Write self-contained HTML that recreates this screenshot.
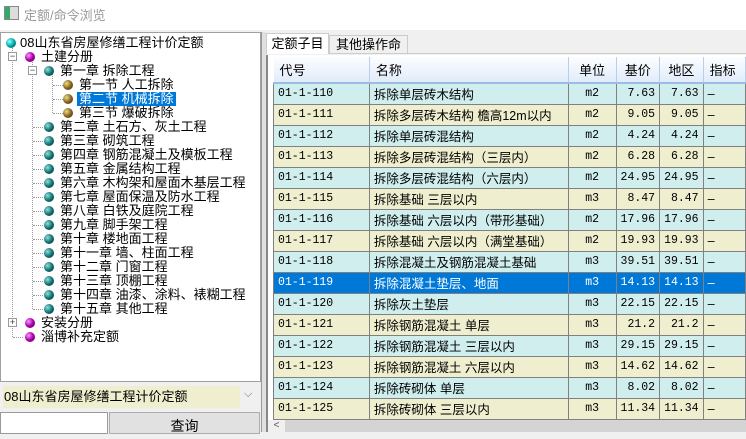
<!DOCTYPE html><html><head><meta charset="utf-8"><style>
*{margin:0;padding:0;box-sizing:border-box}
body{width:746px;height:432px;overflow:hidden;background:#f0f0f0;font-family:"Liberation Sans","Noto Sans CJK SC","WenQuanYi Zen Hei",sans-serif;font-size:12px;color:#000;position:relative}
.abs{position:absolute}
#title{left:0;top:0;width:746px;height:30px;background:#fff}
#tree{left:0;top:32px;width:261px;height:350px;background:#fff;border:1px solid #a0a0a0}
.row{position:absolute;height:14px;line-height:14px;white-space:nowrap;font-size:13px}
.ball{position:absolute;width:10px;height:10px;border-radius:50%}
.c{background:radial-gradient(circle at 35% 35%,#9ff,#0aa 50%,#044)}
.m{background:radial-gradient(circle at 35% 35%,#f9f,#a0a 50%,#404)}
.t{background:radial-gradient(circle at 35% 35%,#9dd,#177 50%,#022)}
.o{background:radial-gradient(circle at 35% 35%,#ed8,#862 50%,#320)}
.dv{position:absolute;border-left:1px dotted #999}
.dh{position:absolute;border-top:1px dotted #999;width:10px}
.pm{position:absolute;width:9px;height:9px;border:1px solid #999;background:#fff;font-size:9px;line-height:7px;text-align:center;color:#333}
table{border-collapse:collapse;position:absolute;left:273px;top:57px;table-layout:fixed}
td{border:1px solid #808080;height:21px;font-size:12.5px;padding:0 4px;white-space:nowrap;overflow:hidden}
td.k{font-family:"Liberation Mono",monospace;font-size:11.5px}
th{height:26px;font-weight:normal;font-size:13px;text-align:left;padding:0 6px;background:linear-gradient(#fdfdff,#e0ecfa);border-right:1px solid #b8d0ec;border-bottom:2px solid #9cbce4}
tr.a td{background:#d0eeee}tr.b td{background:#efefd0}
tr.s td{background:#0078d7;color:#fff}
.u{text-align:center;font-family:"Liberation Mono",monospace;font-size:11.5px}.n{text-align:right;font-family:"Liberation Mono",monospace;font-size:11.5px}
</style></head><body>
<div id="title" class="abs"><div class="abs" style="left:4px;top:6px;width:15px;height:14px;border:1px solid #888;background:linear-gradient(90deg,#3a6 40%,#ddd 40%)"></div><div class="abs" style="left:24px;top:5px;color:#999;font-size:13px">定额/命令浏览</div></div>
<div id="tree" class="abs">
<div class="dv" style="left:11px;top:12px;height:292px"></div>
<div class="dv" style="left:31px;top:26px;height:250px"></div>
<div class="dv" style="left:51px;top:40px;height:40px"></div>
<div class="ball c" style="left:5px;top:5px"></div><div class="row" style="left:19px;top:3px">08山东省房屋修缮工程计价定额</div>
<div class="pm" style="left:7px;top:19px">−</div><div class="ball m" style="left:24px;top:19px"></div><div class="row" style="left:40px;top:17px">土建分册</div>
<div class="pm" style="left:27px;top:33px">−</div><div class="ball t" style="left:43px;top:33px"></div><div class="row" style="left:59px;top:31px">第一章 拆除工程</div>
<div class="dh" style="left:52px;top:52px"></div><div class="ball o" style="left:62px;top:47px"></div><div class="row" style="left:78px;top:45px">第一节 人工拆除</div>
<div class="dh" style="left:52px;top:66px"></div><div class="ball o" style="left:62px;top:61px"></div><div class="row" style="left:76px;top:59px;background:#0078d7;color:#fff;padding:0 2px">第二节 机械拆除</div>
<div class="dh" style="left:52px;top:80px"></div><div class="ball o" style="left:62px;top:75px"></div><div class="row" style="left:78px;top:73px">第三节 爆破拆除</div>
<div class="dh" style="left:32px;top:94px"></div><div class="ball t" style="left:43px;top:89px"></div><div class="row" style="left:59px;top:87px">第二章 土石方、灰土工程</div>
<div class="dh" style="left:32px;top:108px"></div><div class="ball t" style="left:43px;top:103px"></div><div class="row" style="left:59px;top:101px">第三章 砌筑工程</div>
<div class="dh" style="left:32px;top:122px"></div><div class="ball t" style="left:43px;top:117px"></div><div class="row" style="left:59px;top:115px">第四章 钢筋混凝土及模板工程</div>
<div class="dh" style="left:32px;top:136px"></div><div class="ball t" style="left:43px;top:131px"></div><div class="row" style="left:59px;top:129px">第五章 金属结构工程</div>
<div class="dh" style="left:32px;top:150px"></div><div class="ball t" style="left:43px;top:145px"></div><div class="row" style="left:59px;top:143px">第六章 木构架和屋面木基层工程</div>
<div class="dh" style="left:32px;top:164px"></div><div class="ball t" style="left:43px;top:159px"></div><div class="row" style="left:59px;top:157px">第七章 屋面保温及防水工程</div>
<div class="dh" style="left:32px;top:178px"></div><div class="ball t" style="left:43px;top:173px"></div><div class="row" style="left:59px;top:171px">第八章 白铁及庭院工程</div>
<div class="dh" style="left:32px;top:192px"></div><div class="ball t" style="left:43px;top:187px"></div><div class="row" style="left:59px;top:185px">第九章 脚手架工程</div>
<div class="dh" style="left:32px;top:206px"></div><div class="ball t" style="left:43px;top:201px"></div><div class="row" style="left:59px;top:199px">第十章 楼地面工程</div>
<div class="dh" style="left:32px;top:220px"></div><div class="ball t" style="left:43px;top:215px"></div><div class="row" style="left:59px;top:213px">第十一章 墙、柱面工程</div>
<div class="dh" style="left:32px;top:234px"></div><div class="ball t" style="left:43px;top:229px"></div><div class="row" style="left:59px;top:227px">第十二章 门窗工程</div>
<div class="dh" style="left:32px;top:248px"></div><div class="ball t" style="left:43px;top:243px"></div><div class="row" style="left:59px;top:241px">第十三章 顶棚工程</div>
<div class="dh" style="left:32px;top:262px"></div><div class="ball t" style="left:43px;top:257px"></div><div class="row" style="left:59px;top:255px">第十四章 油漆、涂料、裱糊工程</div>
<div class="dh" style="left:32px;top:276px"></div><div class="ball t" style="left:43px;top:271px"></div><div class="row" style="left:59px;top:269px">第十五章 其他工程</div>
<div class="pm" style="left:7px;top:285px">+</div><div class="ball m" style="left:24px;top:285px"></div><div class="row" style="left:40px;top:283px">安装分册</div>
<div class="dh" style="left:12px;top:304px"></div><div class="ball m" style="left:24px;top:299px"></div><div class="row" style="left:40px;top:297px">淄博补充定额</div>
</div>
<div class="abs" style="left:3px;top:386px;width:237px;height:22px;background:#efefcf;line-height:22px;font-size:13px;padding-left:1px">08山东省房屋修缮工程计价定额</div>
<div class="abs" style="left:244px;top:388px;color:#666;font-size:11px">⌵</div>
<div class="abs" style="left:0;top:412px;width:108px;height:22px;background:#fff;border:1px solid #999"></div>
<div class="abs" style="left:109px;top:412px;width:151px;height:22px;background:#e1e1e1;border:1px solid #adadad;text-align:center;font-size:14px;line-height:26px">查询</div>
<div class="abs" style="left:261px;top:32px;width:5px;height:400px;background:#e0e0e0;border-left:1px solid #999"></div>
<div class="abs" style="left:266px;top:32px;width:480px;height:22px;border-bottom:1px solid #ccc"></div>
<div class="abs" style="left:266px;top:33px;width:63px;height:21px;background:#fff;border:1px solid #ccc;border-bottom:none;line-height:20px;text-align:center;font-size:13px">定额子目</div>
<div class="abs" style="left:329px;top:35px;width:79px;height:19px;border:1px solid #ccc;border-bottom:none;line-height:18px;text-align:center;font-size:13px">其他操作命令</div>
<div class="abs" style="left:266px;top:55px;width:480px;height:377px;background:#fff;border-left:2px solid #888"></div>
<table>
<colgroup><col style="width:99px"><col style="width:200px"><col style="width:50px"><col style="width:40px"><col style="width:40px"><col style="width:44px"></colgroup>
<tr><th>代号</th><th>名称</th><th style="text-align:center">单位</th><th style="text-align:center">基价</th><th style="text-align:center">地区</th><th>指标</th></tr>
<tr class="a"><td class="k">01-1-110</td><td>拆除单层砖木结构</td><td class="u">m2</td><td class="n">7.63</td><td class="n">7.63</td><td>–</td></tr>
<tr class="b"><td class="k">01-1-111</td><td>拆除多层砖木结构 檐高12m以内</td><td class="u">m2</td><td class="n">9.05</td><td class="n">9.05</td><td>–</td></tr>
<tr class="a"><td class="k">01-1-112</td><td>拆除单层砖混结构</td><td class="u">m2</td><td class="n">4.24</td><td class="n">4.24</td><td>–</td></tr>
<tr class="b"><td class="k">01-1-113</td><td>拆除多层砖混结构（三层内）</td><td class="u">m2</td><td class="n">6.28</td><td class="n">6.28</td><td>–</td></tr>
<tr class="a"><td class="k">01-1-114</td><td>拆除多层砖混结构（六层内）</td><td class="u">m2</td><td class="n">24.95</td><td class="n">24.95</td><td>–</td></tr>
<tr class="b"><td class="k">01-1-115</td><td>拆除基础 三层以内</td><td class="u">m3</td><td class="n">8.47</td><td class="n">8.47</td><td>–</td></tr>
<tr class="a"><td class="k">01-1-116</td><td>拆除基础 六层以内（带形基础）</td><td class="u">m2</td><td class="n">17.96</td><td class="n">17.96</td><td>–</td></tr>
<tr class="b"><td class="k">01-1-117</td><td>拆除基础 六层以内（满堂基础）</td><td class="u">m2</td><td class="n">19.93</td><td class="n">19.93</td><td>–</td></tr>
<tr class="a"><td class="k">01-1-118</td><td>拆除混凝土及钢筋混凝土基础</td><td class="u">m3</td><td class="n">39.51</td><td class="n">39.51</td><td>–</td></tr>
<tr class="s"><td class="k">01-1-119</td><td>拆除混凝土垫层、地面</td><td class="u">m3</td><td class="n">14.13</td><td class="n">14.13</td><td>–</td></tr>
<tr class="a"><td class="k">01-1-120</td><td>拆除灰土垫层</td><td class="u">m3</td><td class="n">22.15</td><td class="n">22.15</td><td>–</td></tr>
<tr class="b"><td class="k">01-1-121</td><td>拆除钢筋混凝土 单层</td><td class="u">m3</td><td class="n">21.2</td><td class="n">21.2</td><td>–</td></tr>
<tr class="a"><td class="k">01-1-122</td><td>拆除钢筋混凝土 三层以内</td><td class="u">m3</td><td class="n">29.15</td><td class="n">29.15</td><td>–</td></tr>
<tr class="b"><td class="k">01-1-123</td><td>拆除钢筋混凝土 六层以内</td><td class="u">m3</td><td class="n">14.62</td><td class="n">14.62</td><td>–</td></tr>
<tr class="a"><td class="k">01-1-124</td><td>拆除砖砌体 单层</td><td class="u">m3</td><td class="n">8.02</td><td class="n">8.02</td><td>–</td></tr>
<tr class="b"><td class="k">01-1-125</td><td>拆除砖砌体 三层以内</td><td class="u">m3</td><td class="n">11.34</td><td class="n">11.34</td><td>–</td></tr>
</table>
<div class="abs" style="left:268px;top:420px;width:478px;height:12px;background:#d4d4d4"></div>
<div class="abs" style="left:268px;top:420px;width:17px;height:12px;background:#f0f0f0;font-size:10px;line-height:12px;text-align:center;color:#555">&lt;</div>
</body></html>
